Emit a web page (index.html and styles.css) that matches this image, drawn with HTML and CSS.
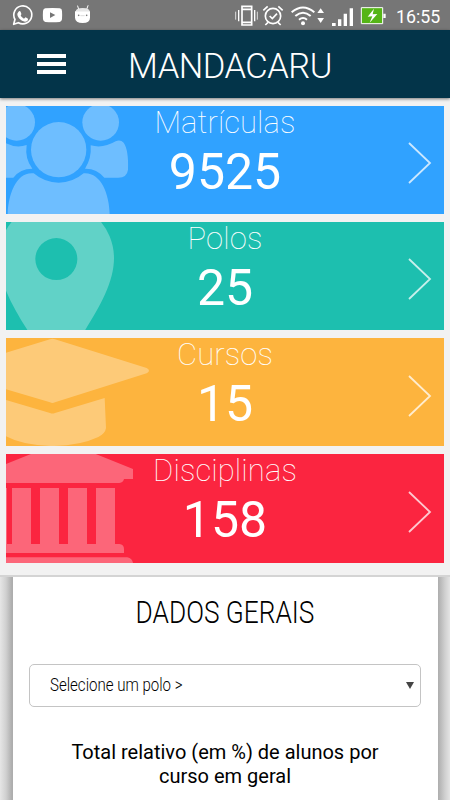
FILE: index.html
```html
<!DOCTYPE html>
<html lang="pt-BR">

<head>
    <meta charset="UTF-8">
    <meta name="viewport" content="width=device-width, initial-scale=1.0">
    <title>Mandacaru</title>
    <link rel="stylesheet" href="styles.css">
</head>

<body>
    <div class="status-bar">
        <svg class="status-left" width="100" height="30" viewBox="0 0 300 90">
            <!-- whatsapp -->
            <path d="M41 73l4-15a27 27 0 1 1 10 10z" fill="none" stroke="#fff" stroke-width="5" stroke-linejoin="round"/>
            <path d="M55 36c3-4 6-3 7 0l2 5c1 2-2 4-2 5 2 5 6 8 10 10 2 0 3-4 5-4l7 4c1 6-4 9-9 9-12-2-24-14-23-24z" fill="#fff"/>
            <!-- youtube -->
            <path d="M136 25q22-2 43 0 7 1 7 8 1 13 0 25-1 7-7 8-22 2-43 0-6-1-7-8-1-13 0-25 1-7 7-8zM150 37v17l16-9z" fill="#fff" fill-rule="evenodd"/>
            <!-- android -->
            <path d="M236 28l-3-10M260 28l4-11" stroke="#fff" stroke-width="3" stroke-linecap="round"/>
            <path d="M227 35q0-11 21-11t21 11z" fill="#e6e6e6"/>
            <path d="M225 34h45v19q0 16-22 16t-23-16z" fill="#fff"/>
            <circle cx="236" cy="46" r="2.5" fill="#767676"/>
            <circle cx="260" cy="46" r="2.5" fill="#767676"/>
            <path d="M241 47h13" stroke="#ccc" stroke-width="2"/>
        </svg>
        <svg class="status-right" width="162" height="30" viewBox="0 0 486 90">
            <!-- vibrate -->
            <path d="M51 19h29v56H51zM51 28h29M51 67h29" fill="none" stroke="#fff" stroke-width="5"/>
            <path d="M41 30v34M89 30v34" stroke="#fff" stroke-width="4"/>
            <path d="M32 35v24M97 35v24" stroke="#ddd" stroke-width="3"/>
            <!-- alarm -->
            <circle cx="144" cy="48" r="23" fill="none" stroke="#fff" stroke-width="5"/>
            <path d="M134 48l8 8 14-15M115 31l13-12M173 31l-13-12M129 67l-8 8M159 67l8 8" fill="none" stroke="#fff" stroke-width="5"/>
            <!-- wifi -->
            <path d="M200 37q34-29 68 0M211 48q23-20 46 0M222 59q12-10 24 0" fill="none" stroke="#fff" stroke-width="6"/>
            <circle cx="234" cy="70" r="6" fill="#fff"/>
            <path d="M277 39l10-14 10 14zM277 54h20l-10 15z" fill="#fff"/>
            <!-- signal -->
            <path d="M321 69h11v9h-11zM339 58h10v20h-10zM356 41h10v37h-10zM374 25h10v53h-10z" fill="#fff"/>
            <!-- battery -->
            <path d="M409 23h64v48h-64z" fill="#55b516" stroke="#fff" stroke-width="3"/>
            <path d="M475 41h7v13h-7zM447 26l-19 24 14-1-8 19 23-26-14 1z" fill="#fff"/>
        </svg>
        <span class="clock">16:55</span>
    </div>

    <header class="header">
        <button class="menu-btn" aria-label="Menu">
            <span></span>
            <span></span>
            <span></span>
        </button>
        <h1>MANDACARU</h1>
    </header>

    <main>
        <div class="cards">
            <a class="card blue">
                <svg class="picture" viewBox="18 22 435 325">
                    <circle cx="50" cy="71" r="55"/>
                    <circle cx="302" cy="71" r="55"/>
                    <circle cx="176" cy="153" r="83"/>
                    <path d="M18 134Q50 150 80 139Q74 180 97 210Q60 210 40 237H18z"/>
                    <path d="M272 140Q310 150 347 128Q361 122 371 132Q386 153 384 213Q381 237 355 237H313Q290 209 255 210Q275 180 272 140z"/>
                    <path d="M23 347C25 285 50 218 101 224Q134 252 176 252T251 224C302 220 328 285 329 347z"/>
                </svg>
                <div class="info">
                    <h2>Matrículas</h2>
                    <p>9525</p>
                </div>
                <svg class="arrow" viewBox="0 0 24 42"><path d="M1 1l21 20L1 41"/></svg>
            </a>
            <a class="card green">
                <svg class="picture" viewBox="18 21 435 325">
                    <path fill-rule="evenodd" d="M-4 130A173 173 0 0 1 342 130C342 200 300 275 255 346H83C38 275-4 200-4 130zM106 132a63 63 0 1 0 126 0a63 63 0 1 0-126 0z"/>
                </svg>
                <div class="info">
                    <h2>Polos</h2>
                    <p>25</p>
                </div>
                <svg class="arrow" viewBox="0 0 24 42"><path d="M1 1l21 20L1 41"/></svg>
            </a>
            <a class="card yellow">
                <svg class="picture" viewBox="18 18 435 325">
                    <path d="M18 62L150 22Q157 19 165 22L440 108Q454 116 440 124L165 211Q157 215 150 211L18 172z"/>
                    <path d="M18 204L150 243Q157 246 165 243L314 198L318 288Q316 304 295 315Q240 341 157 342Q70 341 18 313z"/>
                </svg>
                <div class="info">
                    <h2>Cursos</h2>
                    <p>15</p>
                </div>
                <svg class="arrow" viewBox="0 0 24 42"><path d="M1 1l21 20L1 41"/></svg>
            </a>
            <a class="card red">
                <svg class="picture" viewBox="18 18 435 325">
                    <path d="M18 48L100 15H280L399 63V93H372Q370 103 358 105H18z"/>
                    <path d="M18 120h3v168h15V120h57v168h27V120h57v168h27V120h57v168h27V120h57v168h13Q372 290 372 303V315H18z"/>
                    <path d="M18 328H382Q397 332 399 345H18z"/>
                </svg>
                <div class="info">
                    <h2>Disciplinas</h2>
                    <p>158</p>
                </div>
                <svg class="arrow" viewBox="0 0 24 42"><path d="M1 1l21 20L1 41"/></svg>
            </a>
        </div>

        <section class="panel-wrap">
            <div class="panel">
                <h3><span>DADOS GERAIS</span></h3>
                <div class="select">
                    <span class="select-text">Selecione um polo &gt;</span>
                    <span class="caret"></span>
                </div>
                <p class="chart-title">Total relativo (em %) de alunos por<br>curso em geral</p>
            </div>
        </section>
    </main>
</body>

</html>
```
FILE: styles.css
```css
* {
    box-sizing: border-box;
}

body {
    margin: 0;
    height: 800px;
    overflow: hidden;
    background: #f2f2f2;
    font-family: Roboto, "Liberation Sans", sans-serif;
}

h1,
h2,
h3,
p {
    margin: 0;
}

.status-bar {
    display: flex;
    height: 30px;
    background: #767676;
    color: #fff;
}

.status-right {
    margin-left: 125px;
}

.clock {
    margin-left: 9px;
    font-size: 17.8px;
    line-height: 33px;
    white-space: nowrap;
}

.header {
    position: relative;
    display: flex;
    align-items: center;
    height: 68px;
    padding-left: 37px;
    background: #033449;
    box-shadow: 0 1px 3px rgba(0, 0, 0, 0.5);
    color: #fff;
}

.menu-btn {
    display: flex;
    flex-direction: column;
    gap: 4px;
    width: 29px;
    padding: 0;
    background: none;
    border: none;
}

.menu-btn span {
    width: 100%;
    height: 4px;
    background: #fff;
}

.header h1 {
    margin-left: 62px;
    padding-top: 4px;
    font-size: 34.5px;
    font-weight: 300;
    line-height: 40px;
    letter-spacing: -0.5px;
}

.cards {
    display: flex;
    flex-direction: column;
    gap: 7.9px;
    padding: 7.5px 6px 0;
}

.card {
    position: relative;
    display: flex;
    justify-content: center;
    height: 108.4px;
    color: #fff;
}

.blue {
    background: #30a2ff;
}

.green {
    background: #1dbfaf;
}

.yellow {
    background: #fdb43e;
}

.red {
    background: #fb2540;
}

.picture {
    position: absolute;
    left: 0;
    top: 0;
    width: 145px;
    height: 108.4px;
    fill: rgba(255, 255, 255, 0.3);
}

.info {
    position: relative;
    text-align: center;
}

.info h2 {
    margin-top: -2px;
    font-size: 31px;
    font-weight: 100;
    line-height: 37px;
    letter-spacing: 0.1px;
}

.info p {
    margin-top: -2px;
    font-size: 50px;
    line-height: 66px;
}

.arrow {
    position: absolute;
    right: 12px;
    top: 36.5px;
    width: 24px;
    height: 42px;
    fill: none;
    stroke: rgba(255, 255, 255, 0.75);
    stroke-width: 1.8;
}

/* side shadows only, the top edge is a plain line */
.panel-wrap {
    height: 225px;
    margin-top: 12px;
    padding: 0 12px 0 12.5px;
    border-top: 2px solid #d4d4d4;
    background:
        linear-gradient(to right, #e6e6e6, #d0d0d0 6px, #adadad 12px) left / 13px 100% no-repeat,
        linear-gradient(to left, #e4e4e4, #d0d0d0 5px, #adadad 12px) right / 13px 100% no-repeat;
    overflow: hidden;
}

.panel {
    height: 240px;
    padding: 16px 17px 0 16.5px;
    background: #fff;
    text-align: center;
}

.panel h3 {
    font-size: 32px;
    font-weight: 300;
    line-height: 38px;
}

.panel h3 span {
    display: inline-block;
    transform: scaleX(0.82);
}

.select {
    display: flex;
    justify-content: space-between;
    align-items: center;
    height: 43px;
    margin-top: 33px;
    padding: 0 6px 0 20px;
    border: 1.5px solid #c4c4c4;
    border-radius: 5px;
}

.select-text {
    font-size: 17.5px;
    font-weight: 300;
    transform: scaleX(0.86);
    transform-origin: left;
}

.caret {
    border: 4px solid transparent;
    border-top: 7.5px solid #444;
    border-bottom: 0;
}

.chart-title {
    margin-top: 33px;
    font-size: 20px;
    line-height: 24px;
}
```
